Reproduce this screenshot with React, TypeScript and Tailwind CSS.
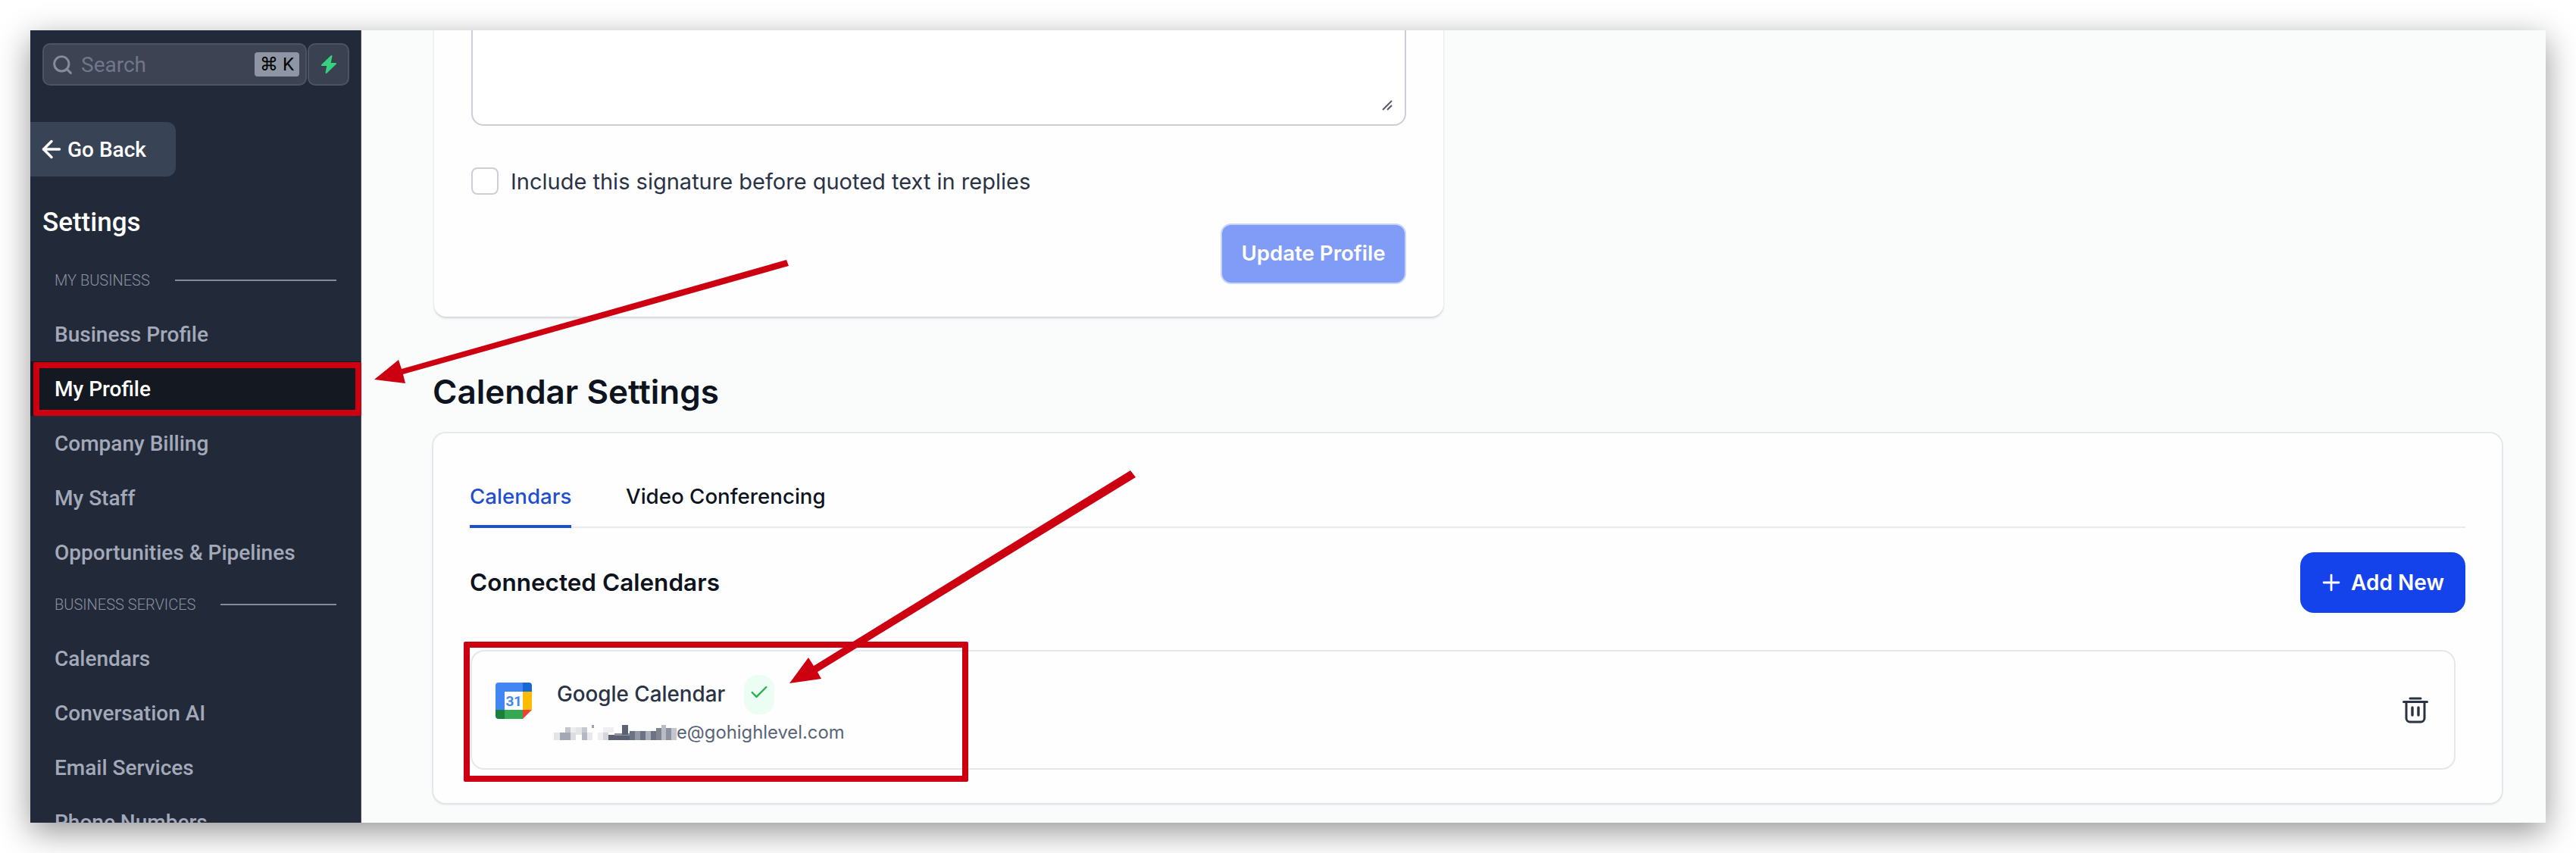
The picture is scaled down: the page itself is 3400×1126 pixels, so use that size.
import { ArrowLeft, Check, Plus, Search } from 'lucide-react';

const businessLinks = ['Business Profile', 'My Profile', 'Company Billing', 'My Staff', 'Opportunities & Pipelines'];
const serviceLinks = ['Calendars', 'Conversation AI', 'Email Services', 'Phone Numbers'];

// mosaic over the redacted part of the email: [x, y, width, height, colour]
const mosaic: [number, number, number, number, string][] = [
  [0, 10, 8, 10, '#e4e5ea'],
  [8, 10, 14, 10, '#a4a8b4'],
  [15, 3, 7, 7, '#c3c6cf'],
  [22, 3, 7, 7, '#eceded'],
  [22, 10, 7, 10, '#dcdde2'],
  [29, 3, 8, 10, '#e3e4e8'],
  [37, 3, 7, 7, '#c6c9d1'],
  [37, 10, 7, 10, '#b5b8c2'],
  [44, 10, 7, 10, '#e7e8ec'],
  [50, 0, 3, 4, '#9ea2ae'],
  [58, 10, 7, 10, '#eeeef1'],
  [65, 3, 7, 7, '#f0f0f2'],
  [65, 10, 7, 10, '#d5d7dd'],
  [72, 3, 7, 7, '#eeeff1'],
  [72, 13, 28, 7, '#5b6274'],
  [80, 11, 20, 3, '#8d92a0'],
  [90, 0, 8, 13, '#5b6274'],
  [100, 8, 7, 12, '#6d7383'],
  [107, 8, 7, 12, '#9398a6'],
  [114, 8, 7, 12, '#6d7383'],
  [121, 8, 7, 12, '#a9adb8'],
  [128, 8, 7, 12, '#6d7383'],
  [135, 4, 7, 16, '#7f8492'],
  [142, 0, 6, 20, '#b9bcc6'],
  [148, 4, 7, 16, '#8d92a0'],
  [155, 4, 7, 16, '#c3c6cf'],
];

function NavHeading({ label }: { label: string }) {
  return (
    <div className="flex h-[30px] items-center gap-[33px] pl-[32px] pr-[32px]">
      <span className="text-[20px] font-light whitespace-nowrap text-[#8b91a1]">{label}</span>
      <div className="h-[2px] flex-1 bg-[#868b9a]" />
    </div>
  );
}

function NavItem({ label, active }: { label: string; active?: boolean }) {
  return (
    <div
      className={`flex h-[72px] shrink-0 items-center pt-[2px] pl-[32px] text-[28px] font-medium ${
        active ? 'bg-[#141821] text-white' : 'text-[#a3a9b8]'
      }`}
    >
      {label}
    </div>
  );
}

function Sidebar() {
  return (
    <aside className="h-full w-[437px] shrink-0 overflow-hidden border-r border-[#4a5162] bg-[#222938] font-['Roboto',sans-serif]">
      <div className="flex pl-[16px] pt-[17px]">
        <div className="flex h-[56px] w-[349px] items-center rounded-[10px] border-2 border-[#4d5362] bg-[#3d4352] pl-[10px] pr-[8px]">
          <Search size={29} strokeWidth={2.4} className="text-[#868c9b]" />
          <span className="ml-[10px] flex-1 pt-[2px] text-[28px] text-[#70778a]">Search</span>
          <span className="flex h-[32px] w-[59px] items-center justify-center rounded-[4px] bg-[#8e95a5] text-[24px] text-black">
            ⌘ K
          </span>
        </div>
        <div className="ml-[1px] flex h-[56px] w-[55px] items-center justify-center rounded-[10px] border-2 border-[#4d5362] bg-[#3a4150]">
          <svg width="24" height="26" viewBox="0 0 24 26">
            <path
              d="M15.5 2 3 14h7.5l-2 10L21 12h-7.5z"
              fill="#34d27f"
              stroke="#34d27f"
              strokeWidth="2"
              strokeLinejoin="round"
            />
          </svg>
        </div>
      </div>

      <div className="mt-[48px] flex h-[72px] w-[192px] items-center rounded-r-[12px] bg-[#394356] pl-[10px] text-[28px] font-medium text-white">
        <ArrowLeft size={36} strokeWidth={2.3} />
        <span className="ml-[3px] pt-[2px]">Go Back</span>
      </div>

      <h2 className="mt-[37px] mb-[37px] pl-[16px] text-[35px] leading-[48px] font-medium text-white">Settings</h2>

      <NavHeading label="MY BUSINESS" />
      <div className="mt-[20px]">
        {businessLinks.map((link) => (
          <NavItem key={link} label={link} active={link === 'My Profile'} />
        ))}
      </div>
      <div className="mt-[18px]">
        <NavHeading label="BUSINESS SERVICES" />
      </div>
      <div className="mt-[20px]">
        {serviceLinks.map((link) => (
          <NavItem key={link} label={link} />
        ))}
      </div>
    </aside>
  );
}

function GoogleCalendarLogo() {
  return (
    <svg width="48" height="48" viewBox="0 0 48 48" className="mt-[10px] shrink-0">
      <path d="M4 0h32v12H12v24H0V4a4 4 0 0 1 4-4z" fill="#4285f4" />
      <path d="M36 0h8a4 4 0 0 1 4 4v8H36z" fill="#1967d2" />
      <rect x="36" y="12" width="12" height="24" fill="#fbbc04" />
      <rect x="12" y="36" width="24" height="12" fill="#34a853" />
      <path d="M0 36h12v12H4a4 4 0 0 1-4-4z" fill="#188038" />
      <path d="M36 36h12L36 48z" fill="#ea4335" />
      <text x="24" y="31" textAnchor="middle" fontSize="19" fontWeight="700" letterSpacing="-0.5" fill="#4285f4" fontFamily="Roboto, sans-serif">
        31
      </text>
    </svg>
  );
}

function TrashIcon() {
  return (
    <svg width="34" height="35" viewBox="0 0 34 35" fill="none" stroke="#2a3345" strokeLinecap="round">
      <path d="M10 2h14" strokeWidth="3" />
      <path d="M1.5 6.5h31" strokeWidth="3" />
      <path d="M5 7v21a5 5 0 0 0 5 5h14a5 5 0 0 0 5-5V7" strokeWidth="3" />
      <path d="M13 14v10M21 14v10" strokeWidth="3.4" />
    </svg>
  );
}

function ProfileCard() {
  return (
    <section className="-mt-[60px] ml-[1px] w-[1332px] rounded-[16px] bg-[#fefefe] px-[49px] pt-[20px] pb-[43px] shadow-[0_2px_3px_rgba(60,70,100,0.22)]">
      <div className="relative">
        <textarea
          readOnly
          className="block h-[166px] w-[1234px] resize-none rounded-[16px] border-2 border-[#ccced8] bg-white"
        />
        <svg width="14" height="14" viewBox="0 0 14 14" className="absolute right-[18px] bottom-[20px]" stroke="#555b69" strokeWidth="2">
          <path d="M1 13 13 1M7 13l6-6" />
        </svg>
      </div>
      <div className="mt-[55px] flex h-[36px] items-center">
        <div className="h-[36px] w-[36px] rounded-[8px] border-2 border-[#ccced8] bg-white" />
        <span className="ml-[16px] pt-[2px] text-[29px] text-[#2a3345]">Include this signature before quoted text in replies</span>
      </div>
      <div className="mt-[38px] flex justify-end">
        <button className="h-[80px] w-[245px] rounded-[14px] border-2 border-[#c7d4fb] bg-[#809cf7] text-[27.6px] font-semibold text-white">
          Update Profile
        </button>
      </div>
    </section>
  );
}

function CalendarCard() {
  return (
    <section className="h-[488px] rounded-[16px] bg-[#fefefe] px-[48px] pt-[62px] shadow-[0_0_0_2px_rgba(226,228,235,0.8),0_2px_3px_rgba(60,70,100,0.16)]">
      <div className="flex h-[63px] gap-[72px] border-b-2 border-[#e9eaee] text-[27.7px]">
        <div className="h-[63px] w-[134px] border-b-4 border-[#1f4fd1] leading-[42px] font-medium text-[#1f4fd1]">Calendars</div>
        <div className="leading-[42px] font-medium text-[#0e1320]">Video Conferencing</div>
      </div>

      <div className="mt-[32px] flex h-[80px] items-center justify-between">
        <h3 className="text-[31.5px] font-semibold text-[#0e1320]">Connected Calendars</h3>
        <button className="flex h-[80px] w-[218px] items-center justify-center gap-[9px] rounded-[18px] bg-[#1443ec] pr-[4px] text-[28px] font-semibold text-white">
          <Plus size={34} strokeWidth={2} />
          Add New
        </button>
      </div>

      <div className="mt-[49px] mr-[13px] ml-[1px] flex h-[158px] items-center justify-between rounded-[18px] border-2 border-[#e6e7ec] bg-[#fefefe] pr-[34px] pl-[31px]">
        <div className="flex gap-[33px] self-start pt-[31px]">
          <GoogleCalendarLogo />
          <div>
            <div className="flex h-[52px] items-center gap-[25px]">
              <span className="text-[27.8px] font-medium text-[#2a3345]">Google Calendar</span>
              <span className="flex h-[52px] w-[40px] justify-center rounded-[18px] bg-[#ecfdf3] pt-[9px]">
                <Check size={28} strokeWidth={2} className="text-[#22b24c]" />
              </span>
            </div>
            <div className="mt-[7px] flex h-[34px] items-center text-[23.8px] text-[#5a6478]">
              <svg width="162" height="20" viewBox="0 0 162 20" className="-ml-[4px] shrink-0">
                {mosaic.map(([x, y, w, h, fill], i) => (
                  <rect key={i} x={x} y={y} width={w} height={h} fill={fill} />
                ))}
              </svg>
              <span>e@gohighlevel.com</span>
            </div>
          </div>
        </div>
        <TrashIcon />
      </div>
    </section>
  );
}

// red markup drawn on top of the screenshot
function Annotations() {
  return (
    <>
      <div className="absolute top-[478px] left-[44px] h-[71px] w-[433px] rounded-[2px] border-[8px] border-[#cc0011]" />
      <div className="absolute top-[847px] left-[612px] h-[185px] w-[666px] rounded-[2px] border-[8px] border-[#cc0011]" />
      <svg className="absolute top-0 left-0" width="3400" height="1126" fill="#cc0011">
        <path d="M1038 343 1041 351 532 494 535 506 494 501 526 475 530 487z" />
        <path d="M1492 621 1499 630 1079 887 1084 896 1042 902 1067 868 1074 879z" />
      </svg>
    </>
  );
}

export default function App() {
  return (
    <div className="relative h-[1126px] w-[3400px] overflow-hidden bg-white p-[40px]">
      <div className="flex h-[1046px] w-[3320px] bg-[#fafbfb] font-['Inter',sans-serif] shadow-[0_12px_40px_rgba(0,0,0,0.42)]">
        <Sidebar />
        <main className="h-full flex-1 overflow-hidden pr-[58px] pl-[95px]">
          <ProfileCard />
          <h2 className="mt-[69px] mb-[25px] -ml-[1px] text-[44px] leading-[60px] font-semibold text-[#0e1320]">Calendar Settings</h2>
          <CalendarCard />
        </main>
      </div>
      <Annotations />
    </div>
  );
}
